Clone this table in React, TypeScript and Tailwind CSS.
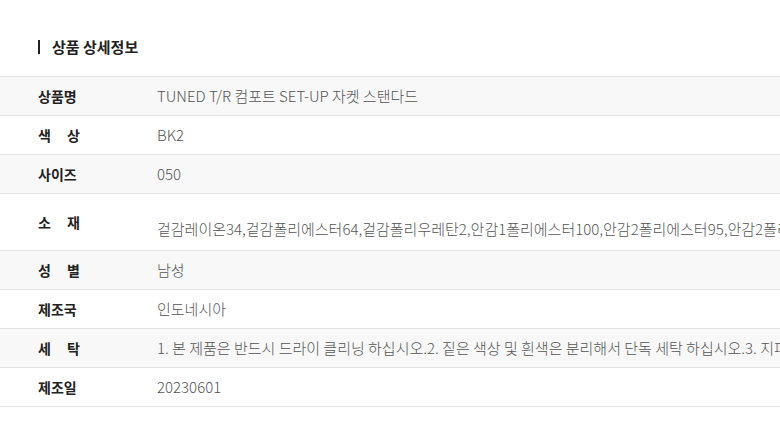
const rows: { label: string[]; value: string; tall?: boolean }[] = [
  { label: ["상품명"], value: "TUNED T/R 컴포트 SET-UP 자켓 스탠다드" },
  { label: ["색", "상"], value: "BK2" },
  { label: ["사이즈"], value: "050" },
  {
    label: ["소", "재"],
    value:
      "겉감레이온34,겉감폴리에스터64,겉감폴리우레탄2,안감1폴리에스터100,안감2폴리에스터95,안감2폴리우레탄5",
    tall: true,
  },
  { label: ["성", "별"], value: "남성" },
  { label: ["제조국"], value: "인도네시아" },
  {
    label: ["세", "탁"],
    value:
      "1. 본 제품은 반드시 드라이 클리닝 하십시오.2. 짙은 색상 및 흰색은 분리해서 단독 세탁 하십시오.3. 지퍼, 단추는 잠근 후 세탁하십시오.",
  },
  { label: ["제조일"], value: "20230601" },
];

export default function App() {
  return (
    <div
      className="w-[780px] h-[445px] overflow-hidden bg-white"
      style={{ fontFamily: '"Noto Sans CJK KR", "Noto Sans", sans-serif' }}
    >
      <h3 className="flex items-start h-[76px] pl-[38px] pt-[36px] text-[15px] leading-[22px] font-bold text-[#222]">
        <span className="w-[2px] h-[14px] mt-[4px] bg-[#222] mr-[12px]" />
        상품 상세정보
      </h3>
      <div className="border-t border-[#e3e3e3]">
        {rows.map((row, i) => (
          <div
            key={i}
            className={`flex items-center border-b border-[#e3e3e3] whitespace-nowrap ${
              row.tall ? "h-[57px]" : "h-[39px]"
            } ${i % 2 === 0 ? "bg-[#f8f8f8]" : "bg-white"}`}
          >
            <div className="w-[157px] shrink-0 pl-[38px]">
              <div className="flex justify-between w-[42px] text-[14px] font-bold text-[#222]">
                {row.label.map((c, j) => (
                  <span key={j}>{c}</span>
                ))}
              </div>
            </div>
            <div
              className={`text-[15px] font-light text-[#555] ${
                row.tall ? "mt-[14px]" : ""
              }`}
            >
              {row.value}
            </div>
          </div>
        ))}
      </div>
    </div>
  );
}
